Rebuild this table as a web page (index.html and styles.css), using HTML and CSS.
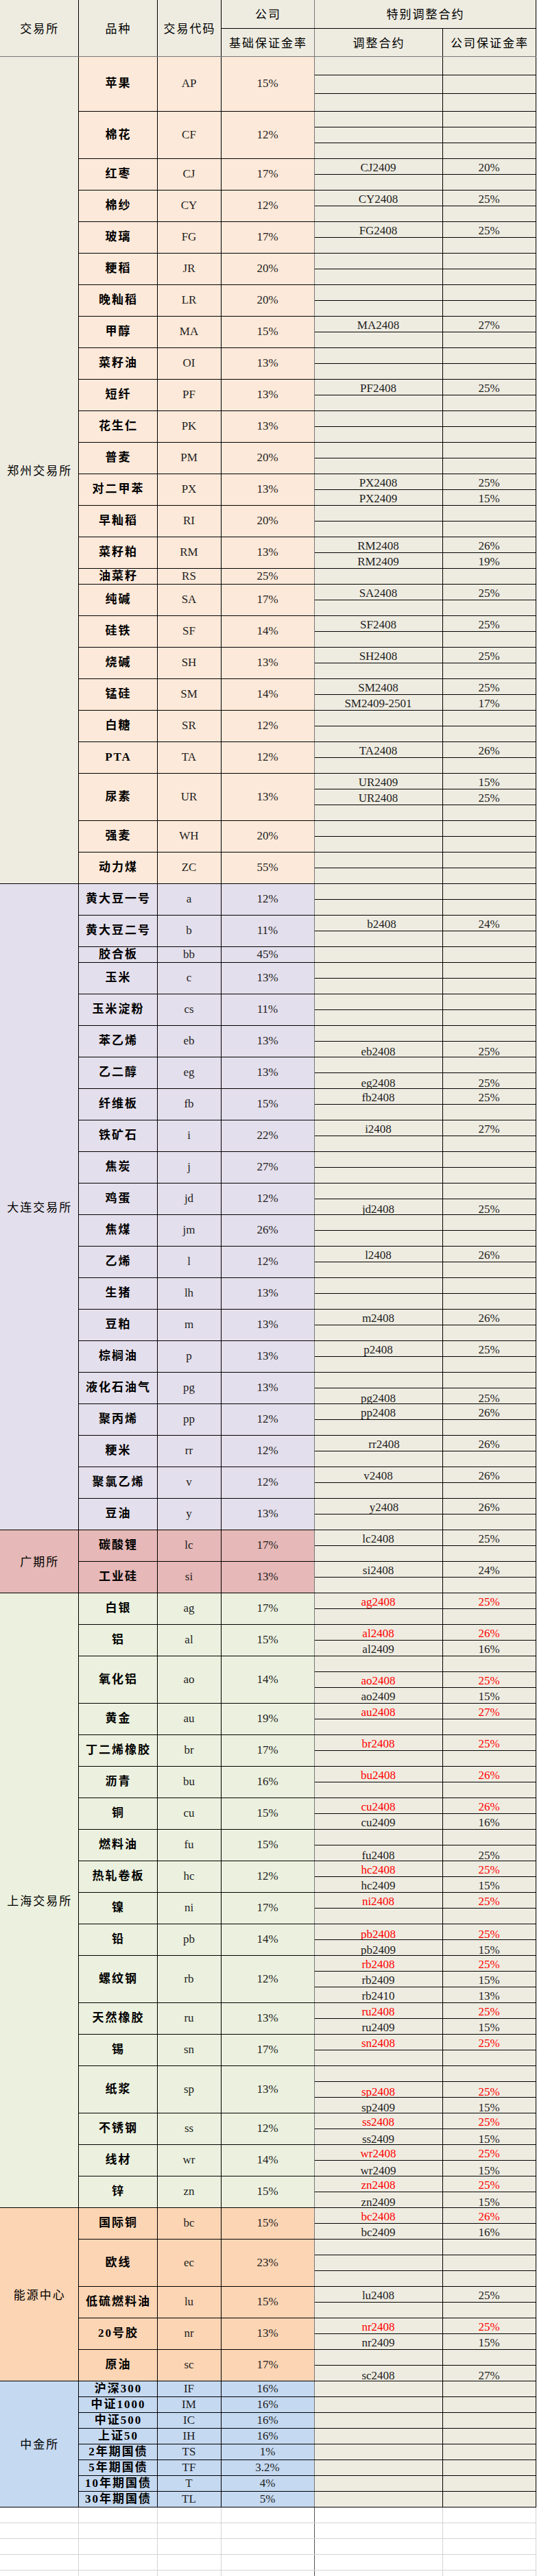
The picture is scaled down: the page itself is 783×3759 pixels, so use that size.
FILE: index.html
```html
<!DOCTYPE html>
<html lang="zh-CN">
<head>
<meta charset="utf-8">
<title>保证金率</title>
<link rel="stylesheet" href="styles.css">
</head>
<body>
<table class="sheet">
<colgroup><col class="w1"><col class="w2"><col class="w3"><col class="w4"><col class="w5"><col class="w6"></colgroup>
<thead>
<tr><th class="h0" rowspan="2">交易所</th><th class="hm" rowspan="2">品种</th><th class="hm" rowspan="2">交易代码</th><th class="hd">公司</th><th colspan="2">特别调整合约</th></tr>
<tr><th class="hd hb">基础保证金率</th><th class="hb">调整合约</th><th class="hb">公司保证金率</th></tr>
</thead>
<tbody class="zz">
<tr class="t"><td class="x" rowspan="52">郑州交易所</td><td class="n" rowspan="3">苹果</td><td class="c" rowspan="3">AP</td><td class="r" rowspan="3">15%</td><td class="a"></td><td class="p"></td></tr>
<tr class="t"><td class="a"></td><td class="p"></td></tr>
<tr class="t2"><td class="a"></td><td class="p"></td></tr>
<tr><td class="n" rowspan="3">棉花</td><td class="c" rowspan="3">CF</td><td class="r" rowspan="3">12%</td><td class="a"></td><td class="p"></td></tr>
<tr><td class="a"></td><td class="p"></td></tr>
<tr><td class="a"></td><td class="p"></td></tr>
<tr><td class="n" rowspan="2">红枣</td><td class="c" rowspan="2">CJ</td><td class="r" rowspan="2">17%</td><td class="a">CJ2409</td><td class="p">20%</td></tr>
<tr><td class="a"></td><td class="p"></td></tr>
<tr><td class="n" rowspan="2">棉纱</td><td class="c" rowspan="2">CY</td><td class="r" rowspan="2">12%</td><td class="a">CY2408</td><td class="p">25%</td></tr>
<tr><td class="a"></td><td class="p"></td></tr>
<tr><td class="n" rowspan="2">玻璃</td><td class="c" rowspan="2">FG</td><td class="r" rowspan="2">17%</td><td class="a">FG2408</td><td class="p">25%</td></tr>
<tr><td class="a"></td><td class="p"></td></tr>
<tr><td class="n" rowspan="2">粳稻</td><td class="c" rowspan="2">JR</td><td class="r" rowspan="2">20%</td><td class="a"></td><td class="p"></td></tr>
<tr><td class="a"></td><td class="p"></td></tr>
<tr><td class="n" rowspan="2">晚籼稻</td><td class="c" rowspan="2">LR</td><td class="r" rowspan="2">20%</td><td class="a"></td><td class="p"></td></tr>
<tr><td class="a"></td><td class="p"></td></tr>
<tr><td class="n" rowspan="2">甲醇</td><td class="c" rowspan="2">MA</td><td class="r" rowspan="2">15%</td><td class="a">MA2408</td><td class="p">27%</td></tr>
<tr><td class="a"></td><td class="p"></td></tr>
<tr><td class="n" rowspan="2">菜籽油</td><td class="c" rowspan="2">OI</td><td class="r" rowspan="2">13%</td><td class="a"></td><td class="p"></td></tr>
<tr><td class="a"></td><td class="p"></td></tr>
<tr><td class="n" rowspan="2">短纤</td><td class="c" rowspan="2">PF</td><td class="r" rowspan="2">13%</td><td class="a">PF2408</td><td class="p">25%</td></tr>
<tr><td class="a"></td><td class="p"></td></tr>
<tr><td class="n" rowspan="2">花生仁</td><td class="c" rowspan="2">PK</td><td class="r" rowspan="2">13%</td><td class="a"></td><td class="p"></td></tr>
<tr><td class="a"></td><td class="p"></td></tr>
<tr><td class="n" rowspan="2">普麦</td><td class="c" rowspan="2">PM</td><td class="r" rowspan="2">20%</td><td class="a"></td><td class="p"></td></tr>
<tr><td class="a"></td><td class="p"></td></tr>
<tr><td class="n" rowspan="2">对二甲苯</td><td class="c" rowspan="2">PX</td><td class="r" rowspan="2">13%</td><td class="a">PX2408</td><td class="p">25%</td></tr>
<tr><td class="a">PX2409</td><td class="p">15%</td></tr>
<tr><td class="n" rowspan="2">早籼稻</td><td class="c" rowspan="2">RI</td><td class="r" rowspan="2">20%</td><td class="a"></td><td class="p"></td></tr>
<tr><td class="a"></td><td class="p"></td></tr>
<tr><td class="n" rowspan="2">菜籽粕</td><td class="c" rowspan="2">RM</td><td class="r" rowspan="2">13%</td><td class="a">RM2408</td><td class="p">26%</td></tr>
<tr><td class="a">RM2409</td><td class="p">19%</td></tr>
<tr><td class="n">油菜籽</td><td class="c">RS</td><td class="r">25%</td><td class="a"></td><td class="p"></td></tr>
<tr><td class="n" rowspan="2">纯碱</td><td class="c" rowspan="2">SA</td><td class="r" rowspan="2">17%</td><td class="a">SA2408</td><td class="p">25%</td></tr>
<tr><td class="a"></td><td class="p"></td></tr>
<tr><td class="n" rowspan="2">硅铁</td><td class="c" rowspan="2">SF</td><td class="r" rowspan="2">14%</td><td class="a">SF2408</td><td class="p">25%</td></tr>
<tr><td class="a"></td><td class="p"></td></tr>
<tr><td class="n" rowspan="2">烧碱</td><td class="c" rowspan="2">SH</td><td class="r" rowspan="2">13%</td><td class="a">SH2408</td><td class="p">25%</td></tr>
<tr><td class="a"></td><td class="p"></td></tr>
<tr><td class="n" rowspan="2">锰硅</td><td class="c" rowspan="2">SM</td><td class="r" rowspan="2">14%</td><td class="a">SM2408</td><td class="p">25%</td></tr>
<tr><td class="a">SM2409-2501</td><td class="p">17%</td></tr>
<tr><td class="n" rowspan="2">白糖</td><td class="c" rowspan="2">SR</td><td class="r" rowspan="2">12%</td><td class="a"></td><td class="p"></td></tr>
<tr><td class="a"></td><td class="p"></td></tr>
<tr><td class="n" rowspan="2">PTA</td><td class="c" rowspan="2">TA</td><td class="r" rowspan="2">12%</td><td class="a">TA2408</td><td class="p">26%</td></tr>
<tr><td class="a"></td><td class="p"></td></tr>
<tr><td class="n" rowspan="3">尿素</td><td class="c" rowspan="3">UR</td><td class="r" rowspan="3">13%</td><td class="a">UR2409</td><td class="p">15%</td></tr>
<tr><td class="a">UR2408</td><td class="p">25%</td></tr>
<tr><td class="a"></td><td class="p"></td></tr>
<tr><td class="n" rowspan="2">强麦</td><td class="c" rowspan="2">WH</td><td class="r" rowspan="2">20%</td><td class="a"></td><td class="p"></td></tr>
<tr><td class="a"></td><td class="p"></td></tr>
<tr><td class="n" rowspan="2">动力煤</td><td class="c" rowspan="2">ZC</td><td class="r" rowspan="2">55%</td><td class="a"></td><td class="p"></td></tr>
<tr><td class="a"></td><td class="p"></td></tr>
</tbody>
<tbody class="dl">
<tr><td class="x" rowspan="41">大连交易所</td><td class="n" rowspan="2">黄大豆一号</td><td class="c" rowspan="2">a</td><td class="r" rowspan="2">12%</td><td class="a"></td><td class="p"></td></tr>
<tr><td class="a"></td><td class="p"></td></tr>
<tr><td class="n" rowspan="2">黄大豆二号</td><td class="c" rowspan="2">b</td><td class="r" rowspan="2">11%</td><td class="a s1">b2408</td><td class="p">24%</td></tr>
<tr><td class="a"></td><td class="p"></td></tr>
<tr><td class="n">胶合板</td><td class="c">bb</td><td class="r">45%</td><td class="a"></td><td class="p"></td></tr>
<tr><td class="n" rowspan="2">玉米</td><td class="c" rowspan="2">c</td><td class="r" rowspan="2">13%</td><td class="a"></td><td class="p"></td></tr>
<tr><td class="a"></td><td class="p"></td></tr>
<tr><td class="n" rowspan="2">玉米淀粉</td><td class="c" rowspan="2">cs</td><td class="r" rowspan="2">11%</td><td class="a"></td><td class="p"></td></tr>
<tr><td class="a"></td><td class="p"></td></tr>
<tr><td class="n" rowspan="2">苯乙烯</td><td class="c" rowspan="2">eb</td><td class="r" rowspan="2">13%</td><td class="a"></td><td class="p"></td></tr>
<tr><td class="a lo">eb2408</td><td class="p lo">25%</td></tr>
<tr><td class="n" rowspan="2">乙二醇</td><td class="c" rowspan="2">eg</td><td class="r" rowspan="2">13%</td><td class="a"></td><td class="p"></td></tr>
<tr><td class="a lo">eg2408</td><td class="p lo">25%</td></tr>
<tr><td class="n" rowspan="2">纤维板</td><td class="c" rowspan="2">fb</td><td class="r" rowspan="2">15%</td><td class="a">fb2408</td><td class="p">25%</td></tr>
<tr><td class="a"></td><td class="p"></td></tr>
<tr><td class="n" rowspan="2">铁矿石</td><td class="c" rowspan="2">i</td><td class="r" rowspan="2">22%</td><td class="a">i2408</td><td class="p">27%</td></tr>
<tr><td class="a"></td><td class="p"></td></tr>
<tr><td class="n" rowspan="2">焦炭</td><td class="c" rowspan="2">j</td><td class="r" rowspan="2">27%</td><td class="a"></td><td class="p"></td></tr>
<tr><td class="a"></td><td class="p"></td></tr>
<tr><td class="n" rowspan="2">鸡蛋</td><td class="c" rowspan="2">jd</td><td class="r" rowspan="2">12%</td><td class="a"></td><td class="p"></td></tr>
<tr><td class="a lo">jd2408</td><td class="p lo">25%</td></tr>
<tr><td class="n" rowspan="2">焦煤</td><td class="c" rowspan="2">jm</td><td class="r" rowspan="2">26%</td><td class="a"></td><td class="p"></td></tr>
<tr><td class="a"></td><td class="p"></td></tr>
<tr><td class="n" rowspan="2">乙烯</td><td class="c" rowspan="2">l</td><td class="r" rowspan="2">12%</td><td class="a">l2408</td><td class="p">26%</td></tr>
<tr><td class="a"></td><td class="p"></td></tr>
<tr><td class="n" rowspan="2">生猪</td><td class="c" rowspan="2">lh</td><td class="r" rowspan="2">13%</td><td class="a"></td><td class="p"></td></tr>
<tr><td class="a"></td><td class="p"></td></tr>
<tr><td class="n" rowspan="2">豆粕</td><td class="c" rowspan="2">m</td><td class="r" rowspan="2">13%</td><td class="a">m2408</td><td class="p">26%</td></tr>
<tr><td class="a"></td><td class="p"></td></tr>
<tr><td class="n" rowspan="2">棕榈油</td><td class="c" rowspan="2">p</td><td class="r" rowspan="2">13%</td><td class="a">p2408</td><td class="p">25%</td></tr>
<tr><td class="a"></td><td class="p"></td></tr>
<tr><td class="n" rowspan="2">液化石油气</td><td class="c" rowspan="2">pg</td><td class="r" rowspan="2">13%</td><td class="a"></td><td class="p"></td></tr>
<tr><td class="a lo">pg2408</td><td class="p lo">25%</td></tr>
<tr><td class="n" rowspan="2">聚丙烯</td><td class="c" rowspan="2">pp</td><td class="r" rowspan="2">12%</td><td class="a">pp2408</td><td class="p">26%</td></tr>
<tr><td class="a"></td><td class="p"></td></tr>
<tr><td class="n" rowspan="2">粳米</td><td class="c" rowspan="2">rr</td><td class="r" rowspan="2">12%</td><td class="a s2">rr2408</td><td class="p">26%</td></tr>
<tr><td class="a"></td><td class="p"></td></tr>
<tr><td class="n" rowspan="2">聚氯乙烯</td><td class="c" rowspan="2">v</td><td class="r" rowspan="2">12%</td><td class="a">v2408</td><td class="p">26%</td></tr>
<tr><td class="a"></td><td class="p"></td></tr>
<tr><td class="n" rowspan="2">豆油</td><td class="c" rowspan="2">y</td><td class="r" rowspan="2">13%</td><td class="a s2">y2408</td><td class="p">26%</td></tr>
<tr><td class="a"></td><td class="p"></td></tr>
</tbody>
<tbody class="gz">
<tr><td class="x" rowspan="4">广期所</td><td class="n" rowspan="2">碳酸锂</td><td class="c" rowspan="2">lc</td><td class="r" rowspan="2">17%</td><td class="a">lc2408</td><td class="p">25%</td></tr>
<tr><td class="a"></td><td class="p"></td></tr>
<tr><td class="n" rowspan="2">工业硅</td><td class="c" rowspan="2">si</td><td class="r" rowspan="2">13%</td><td class="a">si2408</td><td class="p">24%</td></tr>
<tr><td class="a"></td><td class="p"></td></tr>
</tbody>
<tbody class="shx">
<tr><td class="x" rowspan="39">上海交易所</td><td class="n" rowspan="2">白银</td><td class="c" rowspan="2">ag</td><td class="r" rowspan="2">17%</td><td class="a red">ag2408</td><td class="p red">25%</td></tr>
<tr><td class="a"></td><td class="p"></td></tr>
<tr><td class="n" rowspan="2">铝</td><td class="c" rowspan="2">al</td><td class="r" rowspan="2">15%</td><td class="a red">al2408</td><td class="p red">26%</td></tr>
<tr><td class="a">al2409</td><td class="p">16%</td></tr>
<tr><td class="n" rowspan="3">氧化铝</td><td class="c" rowspan="3">ao</td><td class="r" rowspan="3">14%</td><td class="a"></td><td class="p"></td></tr>
<tr><td class="a red">ao2408</td><td class="p red">25%</td></tr>
<tr><td class="a">ao2409</td><td class="p">15%</td></tr>
<tr><td class="n" rowspan="2">黄金</td><td class="c" rowspan="2">au</td><td class="r" rowspan="2">19%</td><td class="a red">au2408</td><td class="p red">27%</td></tr>
<tr><td class="a"></td><td class="p"></td></tr>
<tr><td class="n" rowspan="2">丁二烯橡胶</td><td class="c" rowspan="2">br</td><td class="r" rowspan="2">17%</td><td class="a red">br2408</td><td class="p red">25%</td></tr>
<tr><td class="a"></td><td class="p"></td></tr>
<tr><td class="n" rowspan="2">沥青</td><td class="c" rowspan="2">bu</td><td class="r" rowspan="2">16%</td><td class="a red">bu2408</td><td class="p red">26%</td></tr>
<tr><td class="a"></td><td class="p"></td></tr>
<tr><td class="n" rowspan="2">铜</td><td class="c" rowspan="2">cu</td><td class="r" rowspan="2">15%</td><td class="a red">cu2408</td><td class="p red">26%</td></tr>
<tr><td class="a">cu2409</td><td class="p">16%</td></tr>
<tr><td class="n" rowspan="2">燃料油</td><td class="c" rowspan="2">fu</td><td class="r" rowspan="2">15%</td><td class="a"></td><td class="p"></td></tr>
<tr><td class="a lo">fu2408</td><td class="p lo">25%</td></tr>
<tr><td class="n" rowspan="2">热轧卷板</td><td class="c" rowspan="2">hc</td><td class="r" rowspan="2">12%</td><td class="a red">hc2408</td><td class="p red">25%</td></tr>
<tr><td class="a">hc2409</td><td class="p">15%</td></tr>
<tr><td class="n" rowspan="2">镍</td><td class="c" rowspan="2">ni</td><td class="r" rowspan="2">17%</td><td class="a red">ni2408</td><td class="p red">25%</td></tr>
<tr><td class="a"></td><td class="p"></td></tr>
<tr><td class="n" rowspan="2">铅</td><td class="c" rowspan="2">pb</td><td class="r" rowspan="2">14%</td><td class="a red lo">pb2408</td><td class="p red lo">25%</td></tr>
<tr><td class="a lo">pb2409</td><td class="p lo">15%</td></tr>
<tr><td class="n" rowspan="3">螺纹钢</td><td class="c" rowspan="3">rb</td><td class="r" rowspan="3">12%</td><td class="a red">rb2408</td><td class="p red">25%</td></tr>
<tr><td class="a">rb2409</td><td class="p">15%</td></tr>
<tr><td class="a">rb2410</td><td class="p">13%</td></tr>
<tr><td class="n" rowspan="2">天然橡胶</td><td class="c" rowspan="2">ru</td><td class="r" rowspan="2">13%</td><td class="a red">ru2408</td><td class="p red">25%</td></tr>
<tr><td class="a">ru2409</td><td class="p">15%</td></tr>
<tr><td class="n" rowspan="2">锡</td><td class="c" rowspan="2">sn</td><td class="r" rowspan="2">17%</td><td class="a red">sn2408</td><td class="p red">25%</td></tr>
<tr><td class="a"></td><td class="p"></td></tr>
<tr><td class="n" rowspan="3">纸浆</td><td class="c" rowspan="3">sp</td><td class="r" rowspan="3">13%</td><td class="a"></td><td class="p"></td></tr>
<tr><td class="a red lo">sp2408</td><td class="p red lo">25%</td></tr>
<tr><td class="a lo">sp2409</td><td class="p lo">15%</td></tr>
<tr><td class="n" rowspan="2">不锈钢</td><td class="c" rowspan="2">ss</td><td class="r" rowspan="2">12%</td><td class="a red">ss2408</td><td class="p red">25%</td></tr>
<tr><td class="a lo">ss2409</td><td class="p lo">15%</td></tr>
<tr><td class="n" rowspan="2">线材</td><td class="c" rowspan="2">wr</td><td class="r" rowspan="2">14%</td><td class="a red">wr2408</td><td class="p red">25%</td></tr>
<tr><td class="a lo">wr2409</td><td class="p lo">15%</td></tr>
<tr><td class="n" rowspan="2">锌</td><td class="c" rowspan="2">zn</td><td class="r" rowspan="2">15%</td><td class="a red">zn2408</td><td class="p red">25%</td></tr>
<tr><td class="a lo">zn2409</td><td class="p lo">15%</td></tr>
</tbody>
<tbody class="ny">
<tr><td class="x" rowspan="11">能源中心</td><td class="n" rowspan="2">国际铜</td><td class="c" rowspan="2">bc</td><td class="r" rowspan="2">15%</td><td class="a red">bc2408</td><td class="p red">26%</td></tr>
<tr><td class="a">bc2409</td><td class="p">16%</td></tr>
<tr><td class="n" rowspan="3">欧线</td><td class="c" rowspan="3">ec</td><td class="r" rowspan="3">23%</td><td class="a"></td><td class="p"></td></tr>
<tr><td class="a"></td><td class="p"></td></tr>
<tr><td class="a"></td><td class="p"></td></tr>
<tr><td class="n" rowspan="2">低硫燃料油</td><td class="c" rowspan="2">lu</td><td class="r" rowspan="2">15%</td><td class="a">lu2408</td><td class="p">25%</td></tr>
<tr><td class="a"></td><td class="p"></td></tr>
<tr><td class="n" rowspan="2">20号胶</td><td class="c" rowspan="2">nr</td><td class="r" rowspan="2">13%</td><td class="a red">nr2408</td><td class="p red">25%</td></tr>
<tr><td class="a">nr2409</td><td class="p">15%</td></tr>
<tr><td class="n" rowspan="2">原油</td><td class="c" rowspan="2">sc</td><td class="r" rowspan="2">17%</td><td class="a"></td><td class="p"></td></tr>
<tr><td class="a lo">sc2408</td><td class="p lo">27%</td></tr>
</tbody>
<tbody class="zj">
<tr><td class="x" rowspan="8">中金所</td><td class="n">沪深300</td><td class="c">IF</td><td class="r">16%</td><td class="a"></td><td class="p"></td></tr>
<tr><td class="n">中证1000</td><td class="c">IM</td><td class="r">16%</td><td class="a"></td><td class="p"></td></tr>
<tr><td class="n">中证500</td><td class="c">IC</td><td class="r">16%</td><td class="a"></td><td class="p"></td></tr>
<tr><td class="n">上证50</td><td class="c">IH</td><td class="r">16%</td><td class="a"></td><td class="p"></td></tr>
<tr><td class="n">2年期国债</td><td class="c">TS</td><td class="r">1%</td><td class="a"></td><td class="p"></td></tr>
<tr><td class="n">5年期国债</td><td class="c">TF</td><td class="r">3.2%</td><td class="a"></td><td class="p"></td></tr>
<tr><td class="n">10年期国债</td><td class="c">T</td><td class="r">4%</td><td class="a"></td><td class="p"></td></tr>
<tr><td class="n">30年期国债</td><td class="c">TL</td><td class="r">5%</td><td class="a"></td><td class="p"></td></tr>
</tbody>
<tbody class="blank">
<tr><td></td><td></td><td></td><td class="bd"></td><td></td><td></td></tr>
<tr><td></td><td></td><td></td><td class="bd"></td><td></td><td></td></tr>
<tr><td></td><td></td><td></td><td class="bd"></td><td></td><td></td></tr>
<tr><td></td><td></td><td></td><td class="bd"></td><td></td><td></td></tr>
<tr><td></td><td></td><td></td><td class="bd"></td><td></td><td></td></tr>
</tbody>
</table>
</body>
</html>
```

FILE: styles.css
```css
* { box-sizing: border-box; }
html, body { margin: 0; padding: 0; background: #ffffff; }

.sheet {
  border-collapse: collapse;
  table-layout: fixed;
  width: 781px;
  font-family: "Liberation Serif", "Noto Sans CJK SC", serif;
  font-size: 17px;
  color: #1e1e1e;
}
.w1 { width: 114px; }
.w2 { width: 115px; }
.w3 { width: 93px; }
.w4 { width: 136px; }
.w5 { width: 187px; }
.w6 { width: 136px; }

.sheet th,
.sheet td {
  padding: 0;
  border: 1px solid #000;
  text-align: center;
  vertical-align: middle;
  line-height: 20px;
  white-space: nowrap;
  overflow: hidden;
}

/* header */
.sheet thead tr { height: 41px; }
.sheet th {
  background: #eeece1;
  font-family: "Noto Sans CJK SC", sans-serif;
  font-weight: 400;
  letter-spacing: 2px;
  padding-left: 2px;
  color: #000;
}
.sheet thead tr:first-child th { border-top: none; }
.sheet th.h0 { border-left: none; border-bottom-color: #777; }
.sheet th.hm { border-bottom-color: #777; }
.sheet th.hb { border-bottom-color: #777; }
.sheet th.hd { border-right-color: #777; }

/* body rows */
.sheet tbody tr { height: 23px; }
.sheet tbody tr.t { height: 27px; }
.sheet tbody tr.t2 { height: 26px; }

.sheet .x {
  border-left: none;
  font-family: "Noto Sans CJK SC", sans-serif;
  letter-spacing: 2px;
  padding-left: 2px;
  color: #000;
}
.sheet .n {
  font-weight: 700;
  letter-spacing: 2px;
  padding-left: 2px;
  color: #000;
}
.sheet .r { border-right-color: #777; }
.sheet .a,
.sheet .p {
  background: #eeece1;
  vertical-align: bottom;
  line-height: 18px;
}
.sheet .lo { line-height: 14px; }
.sheet .s1 { padding-left: 10px; }
.sheet .s2 { padding-left: 17px; }
.sheet .red { color: #ff0000; }

/* exchange groups */
.zz .x { background: #eeece1; }
.zz .n, .zz .c, .zz .r { background: #fde9d9; }

.dl .x, .dl .n, .dl .c, .dl .r { background: #e4dfec; }

.gz .x, .gz .n, .gz .c, .gz .r { background: #e6b8b7; }

.shx .x, .shx .n, .shx .c, .shx .r { background: #ebf1de; }

.ny .x, .ny .n, .ny .c, .ny .r { background: #fcd5b4; }

.zj .x, .zj .n, .zj .c, .zj .r { background: #c5d9f1; }

/* empty grid below */
.sheet .blank td {
  border-color: #d4d4d4;
  background: #ffffff;
}
.sheet .blank td:first-child { border-left: none; }
.sheet .blank td.bd { border-right-color: #555; }
```
